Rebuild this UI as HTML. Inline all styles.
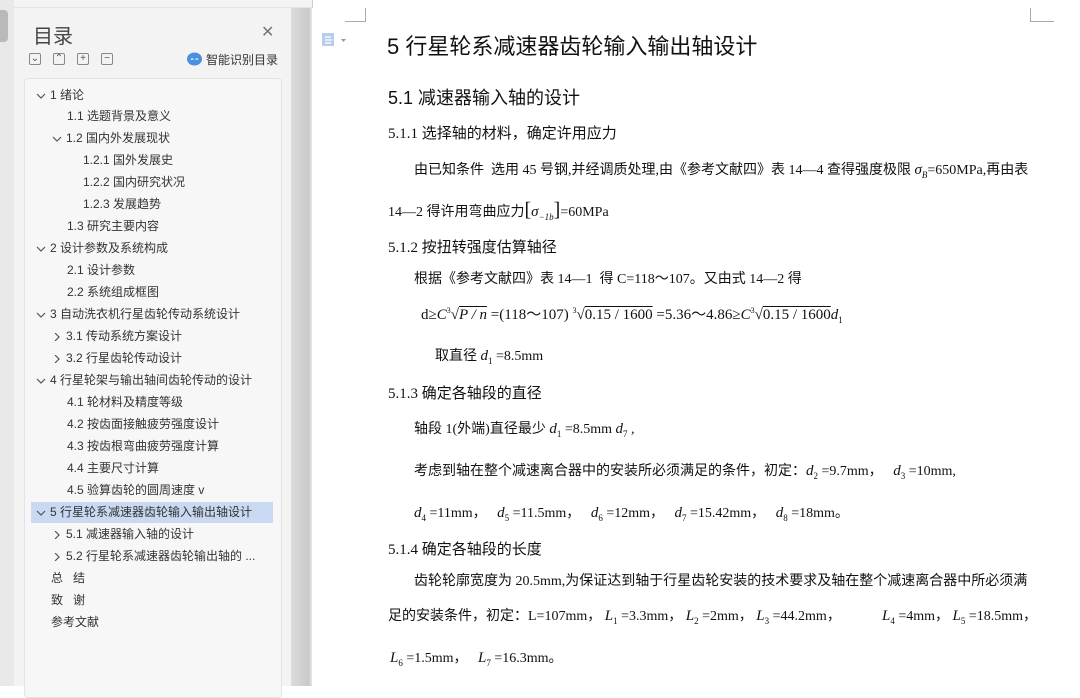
<!DOCTYPE html>
<html><head><meta charset="utf-8">
<style>
*{margin:0;padding:0;box-sizing:border-box}
body{width:1080px;height:686px;overflow:hidden;background:#fff;font-family:"Liberation Sans","Noto Sans CJK SC",sans-serif;position:relative;color:#222}
.a{position:absolute;white-space:nowrap}
#strip{left:0;top:0;width:14px;height:686px;background:#e9e9e9}
#thumb{left:0;top:10px;width:8px;height:32px;background:#b9b9b9;border-radius:0 4px 4px 0}
#topbar{left:0;top:0;width:1080px;height:8px;background:#f3f3f3;border-bottom:1px solid #e4e4e4}
#panel{left:14px;top:8px;width:277px;height:678px;background:#f3f3f3}
#shadow{left:291px;top:8px;width:21px;height:678px;background:linear-gradient(90deg,#dcdcdc,#c9c9c9 85%,#e8e8e8)}
#box{left:24px;top:78px;width:258px;height:620px;background:#f7f7f7;border:1px solid #e3e3e3;border-radius:4px}
.t{font-size:12px;color:#333;line-height:16px}
.doc{font-family:"Liberation Serif","Noto Sans CJK SC",serif;font-size:14px;color:#111;letter-spacing:0}
.h{font-family:"Liberation Sans","Noto Sans CJK SC",sans-serif;color:#111}
i{font-family:"Liberation Serif",serif;font-style:italic;font-size:15px}
sub{font-size:9px}
.ib{width:12px;height:12px;border:1px solid #888;border-radius:2px;font-size:10px;line-height:10px;text-align:center;color:#555}
.cv{display:inline-block;width:10px;height:8px;vertical-align:middle;margin-right:4px}
</style></head><body>
<div class="a" id="topbar"></div>
<div class="a" id="strip"></div><div class="a" id="thumb"></div>
<div class="a" id="panel"></div>
<div class="a" id="shadow"></div>
<div class="a" style="left:312px;top:0;width:768px;height:686px;background:#fff"></div>
<div class="a" style="left:312px;top:0;width:1px;height:8px;background:#ccc"></div>
<div class="a" style="left:365px;top:8px;width:1px;height:14px;background:#aaa"></div>
<div class="a" style="left:345px;top:21px;width:21px;height:1px;background:#aaa"></div>
<div class="a" style="left:1030px;top:8px;width:1px;height:14px;background:#aaa"></div>
<div class="a" style="left:1030px;top:21px;width:24px;height:1px;background:#aaa"></div>
<svg class="a" style="left:321px;top:32px" width="28" height="16"><rect x="1" y="1" width="12" height="13" fill="#b8cdea"/><path d="M4 5h6M4 8h7M4 11h6" stroke="#fff" stroke-width="1.2"/><path d="M20 7l2.5 3l2.5-3z" fill="#999"/></svg>

<div class="a" style="left:33px;top:20px;font-size:20px;color:#444">目录</div>
<div class="a" style="left:261px;top:22px;font-size:16px;color:#777">✕</div>
<div class="a ib" style="left:29px;top:53px">⌄</div>
<div class="a ib" style="left:53px;top:53px">⌃</div>
<div class="a ib" style="left:77px;top:53px">+</div>
<div class="a ib" style="left:101px;top:53px">−</div>
<svg class="a" style="left:187px;top:52px" width="15" height="14"><ellipse cx="7.5" cy="7" rx="7.5" ry="6.5" fill="#4a90e2"/><path d="M4 7.5q1.2-1.4 2.4 0M8.6 7.5q1.2-1.4 2.4 0" stroke="#fff" stroke-width="1.2" fill="none"/></svg>
<div class="a t" style="left:206px;top:52px;font-size:12px">智能识别目录</div>
<div class="a" id="box"></div>
<div class="a" style="left:31px;top:502px;width:242px;height:21px;background:#c9d9f2"></div>

<svg width="0" height="0" style="position:absolute"><defs><symbol id="dn" viewBox="0 0 10 8"><path d="M1 2l4 4l4-4" stroke="#555" stroke-width="1.2" fill="none"/></symbol><symbol id="rt" viewBox="0 0 10 8"><path d="M3 0l4 4l-4 4" stroke="#555" stroke-width="1.2" fill="none"/></symbol></defs></svg>

<div class="a t" style="left:36px;top:87px"><svg class="cv"><use href="#dn"/></svg>1 绪论</div>
<div class="a t" style="left:67px;top:108px">1.1 选题背景及意义</div>
<div class="a t" style="left:52px;top:130px"><svg class="cv"><use href="#dn"/></svg>1.2 国内外发展现状</div>
<div class="a t" style="left:83px;top:152px">1.2.1 国外发展史</div>
<div class="a t" style="left:83px;top:174px">1.2.2 国内研究状况</div>
<div class="a t" style="left:83px;top:196px">1.2.3 发展趋势</div>
<div class="a t" style="left:67px;top:218px">1.3 研究主要内容</div>
<div class="a t" style="left:36px;top:240px"><svg class="cv"><use href="#dn"/></svg>2 设计参数及系统构成</div>
<div class="a t" style="left:67px;top:262px">2.1 设计参数</div>
<div class="a t" style="left:67px;top:284px">2.2 系统组成框图</div>
<div class="a t" style="left:36px;top:306px"><svg class="cv"><use href="#dn"/></svg>3 自动洗衣机行星齿轮传动系统设计</div>
<div class="a t" style="left:52px;top:328px"><svg class="cv"><use href="#rt"/></svg>3.1 传动系统方案设计</div>
<div class="a t" style="left:52px;top:350px"><svg class="cv"><use href="#rt"/></svg>3.2 行星齿轮传动设计</div>
<div class="a t" style="left:36px;top:372px"><svg class="cv"><use href="#dn"/></svg>4 行星轮架与输出轴间齿轮传动的设计</div>
<div class="a t" style="left:67px;top:394px">4.1 轮材料及精度等级</div>
<div class="a t" style="left:67px;top:416px">4.2 按齿面接触疲劳强度设计</div>
<div class="a t" style="left:67px;top:438px">4.3 按齿根弯曲疲劳强度计算</div>
<div class="a t" style="left:67px;top:460px">4.4 主要尺寸计算</div>
<div class="a t" style="left:67px;top:482px">4.5 验算齿轮的圆周速度 v</div>
<div class="a t" style="left:36px;top:504px"><svg class="cv"><use href="#dn"/></svg>5 行星轮系减速器齿轮输入输出轴设计</div>
<div class="a t" style="left:52px;top:526px"><svg class="cv"><use href="#rt"/></svg>5.1 减速器输入轴的设计</div>
<div class="a t" style="left:52px;top:548px"><svg class="cv"><use href="#rt"/></svg>5.2 行星轮系减速器齿轮输出轴的 ...</div>
<div class="a t" style="left:51px;top:570px">总&nbsp;&nbsp;&nbsp;结</div>
<div class="a t" style="left:51px;top:592px">致&nbsp;&nbsp;&nbsp;谢</div>
<div class="a t" style="left:51px;top:614px">参考文献</div>

<div class="a h" style="left:387px;top:29px;font-size:22px">5 行星轮系减速器齿轮输入输出轴设计</div>
<div class="a h" style="left:388px;top:84px;font-size:18px">5.1 减速器输入轴的设计</div>
<div class="a doc" style="left:388px;top:122px;font-size:15px">5.1.1 选择轴的材料，确定许用应力</div>
<div class="a doc" style="left:414px;top:159px">由已知条件&nbsp; 选用 45 号钢,并经调质处理,由《参考文献四》表 14—4 查得强度极限 <i>σ<sub>B</sub></i>=650MPa,再由表</div>
<div class="a doc" style="left:388px;top:199px">14—2 得许用弯曲应力<span style="font-size:20px">[</span><i>σ<sub>−1b</sub></i><span style="font-size:20px">]</span>=60MPa</div>
<div class="a doc" style="left:388px;top:236px;font-size:15px">5.1.2 按扭转强度估算轴径</div>
<div class="a doc" style="left:414px;top:268px">根据《参考文献四》表 14—1&nbsp; 得 C=118～107。又由式 14—2 得</div>
<div class="a doc" style="left:421px;top:303px;font-size:15px">d≥<i>C</i><sup style="font-size:8px">3</sup>√<span style="text-decoration:overline"><i>P / n</i></span> =(118～107) <sup style="font-size:8px">3</sup>√<span style="text-decoration:overline">0.15 / 1600</span> =5.36～4.86≥<i>C</i><sup style="font-size:8px">3</sup>√<span style="text-decoration:overline">0.15 / 1600</span><i>d</i><sub>1</sub></div>
<div class="a doc" style="left:435px;top:345px">取直径 <i>d</i><sub>1</sub> =8.5mm</div>
<div class="a doc" style="left:388px;top:382px;font-size:15px">5.1.3 确定各轴段的直径</div>
<div class="a doc" style="left:414px;top:418px">轴段 1(外端)直径最少 <i>d</i><sub>1</sub> =8.5mm <i>d</i><sub>7</sub> ,</div>
<div class="a doc" style="left:414px;top:460px">考虑到轴在整个减速离合器中的安装所必须满足的条件，初定：<i>d</i><sub>2</sub> =9.7mm，&nbsp;&nbsp; <i>d</i><sub>3</sub> =10mm,</div>
<div class="a doc" style="left:414px;top:502px"><i>d</i><sub>4</sub> =11mm，&nbsp;&nbsp; <i>d</i><sub>5</sub> =11.5mm，&nbsp;&nbsp; <i>d</i><sub>6</sub> =12mm，&nbsp;&nbsp; <i>d</i><sub>7</sub> =15.42mm，&nbsp;&nbsp; <i>d</i><sub>8</sub> =18mm。</div>
<div class="a doc" style="left:388px;top:538px;font-size:15px">5.1.4 确定各轴段的长度</div>
<div class="a doc" style="left:414px;top:570px">齿轮轮廓宽度为 20.5mm,为保证达到轴于行星齿轮安装的技术要求及轴在整个减速离合器中所必须满</div>
<div class="a doc" style="left:388px;top:605px">足的安装条件，初定：L=107mm，&nbsp;<i>L</i><sub>1</sub> =3.3mm，&nbsp;<i>L</i><sub>2</sub> =2mm，&nbsp;<i>L</i><sub>3</sub> =44.2mm，</div>
<div class="a doc" style="left:882px;top:605px"><i>L</i><sub>4</sub> =4mm，&nbsp;<i>L</i><sub>5</sub> =18.5mm，</div>
<div class="a doc" style="left:390px;top:647px"><i>L</i><sub>6</sub> =1.5mm，&nbsp;&nbsp; <i>L</i><sub>7</sub> =16.3mm。</div>
</body></html>
